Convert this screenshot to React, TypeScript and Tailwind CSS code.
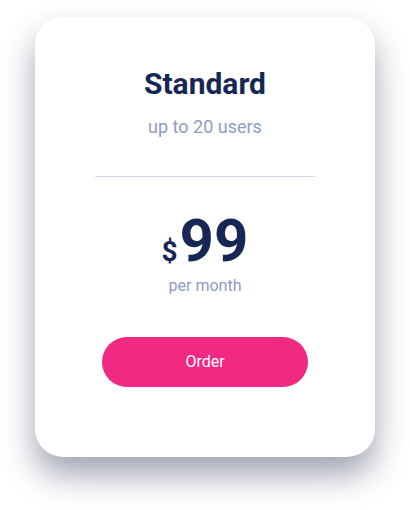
export default function App() {
  return (
    <main className="w-[410px] h-[510px] bg-white pt-[17px] flex justify-center font-['Roboto',sans-serif]">
      <div className="w-[340px] h-[440px] bg-white rounded-[28px] shadow-[0_18px_32px_rgba(20,30,60,0.4)] flex flex-col items-center pt-[49px]">
        <h2 className="text-[30px] leading-[36px] font-bold text-[#172755]">Standard</h2>
        <p className="mt-[13px] text-[18px] leading-[24px] text-[#8e9cc5]">up to 20 users</p>
        <div className="mt-[37px] w-[220px] h-px bg-[#d4dbec]"></div>
        <div className="mt-[34px] flex items-baseline text-[#172755] font-bold">
          <span className="text-[28px] leading-none mr-[2px]">$</span>
          <span className="text-[60px] leading-[60px]">99</span>
        </div>
        <p className="mt-[3px] text-[16px] leading-[24px] text-[#8e9cc5]">per month</p>
        <button className="mt-[39px] w-[206px] h-[50px] rounded-full bg-[#f02a82] text-white text-[16px]">
          Order
        </button>
      </div>
    </main>
  );
}
